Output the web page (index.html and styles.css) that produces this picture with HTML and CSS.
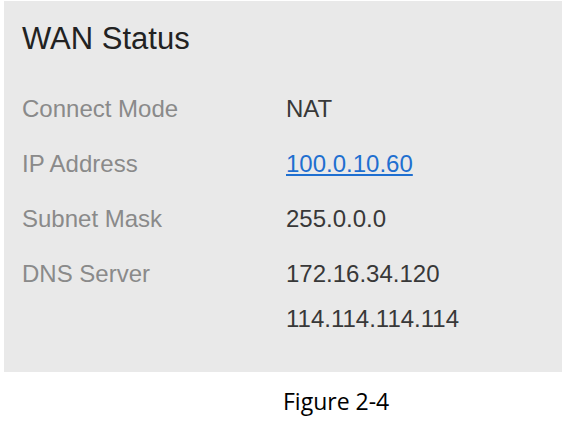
FILE: index.html
```html
<!DOCTYPE html>
<html lang="en">
<head>
    <meta charset="UTF-8">
    <meta name="viewport" content="width=device-width, initial-scale=1.0">
    <title>WAN Status</title>

    <link rel="stylesheet" href="styles.css">
</head>
<body>

    <div class="panel">
        <h1 class="panel-title">WAN Status</h1>
        <div class="status-grid">
            <div class="label">Connect Mode</div>
            <div class="value">NAT</div>

            <div class="label">IP Address</div>
            <div class="value"><a href="#" class="ip-link">100.0.10.60</a></div>

            <div class="label">Subnet Mask</div>
            <div class="value">255.0.0.0</div>

            <div class="label">DNS Server</div>
            <div class="value">
                <div>172.16.34.120</div>
                <div>114.114.114.114</div>
            </div>
        </div>
    </div>

    <p class="caption">Figure 2-4</p>

</body>
</html>
```

FILE: styles.css
```css
* {
    padding: 0;
    margin: 0;
    box-sizing: border-box;
}

body {
    background-color: white;
    font-family: "Liberation Sans", Arial, sans-serif;
}

.panel {
    background-color: #e9e9e9;
    width: 558px;
    height: 371px;
    margin: 1px 0 0 4px;
    padding: 20px 18px 0 18px;
}

.panel-title {
    font-size: 31px;
    font-weight: normal;
    line-height: 36px;
    color: #222;
    margin-bottom: 29px;
}

.status-grid {
    display: grid;
    grid-template-columns: 264px 1fr;
    row-gap: 10px;
    font-size: 24px;
    line-height: 45px;
}

.label {
    color: #8a8a8a;
}

.value {
    color: #383838;
}

.ip-link {
    color: #1f6fd0;
    text-decoration: underline;
}

.caption {
    font-family: "Open Sans", sans-serif;
    font-size: 23px;
    line-height: 30px;
    color: black;
    margin: 14px 0 0 283px;
}
```
